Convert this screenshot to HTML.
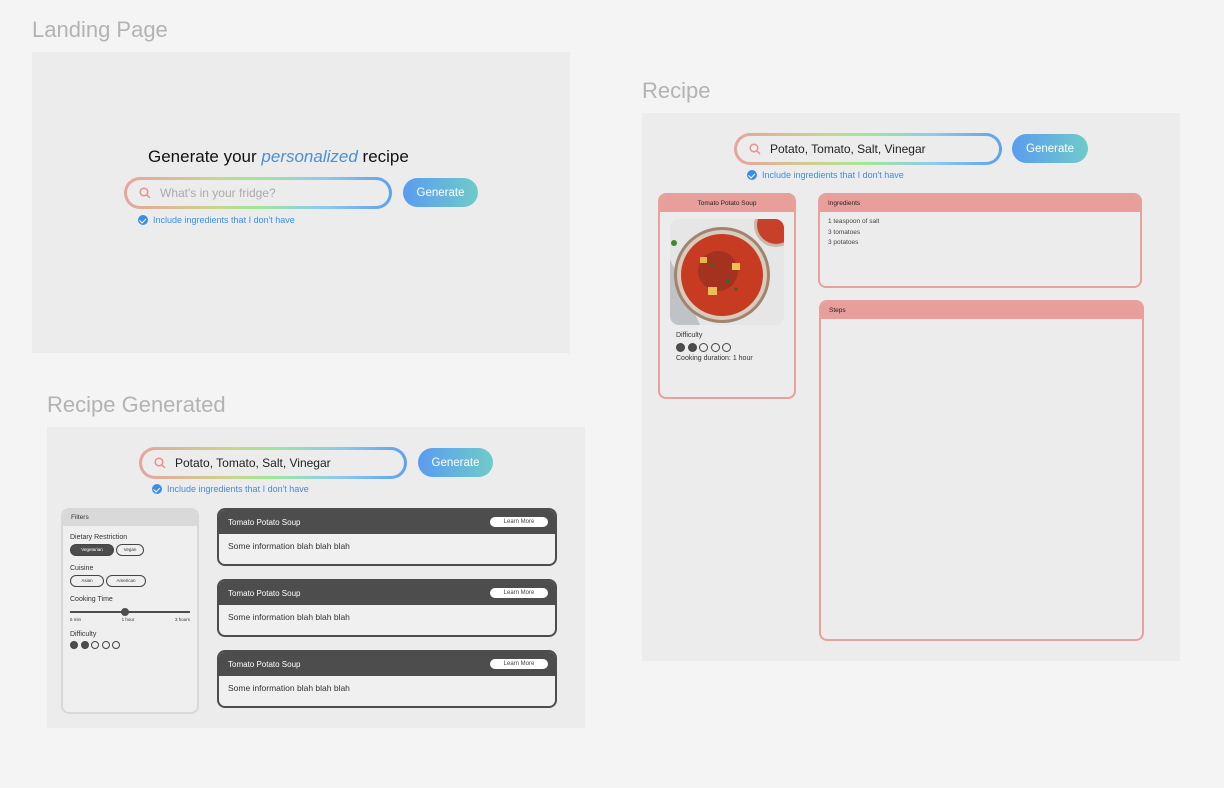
<!DOCTYPE html>
<html><head><meta charset="utf-8"><style>
*{box-sizing:border-box;margin:0;padding:0}
body{width:1224px;height:788px;background:#f4f4f4;font-family:"Liberation Sans",sans-serif;position:relative;overflow:hidden}
.a{position:absolute}
.ft{position:absolute;color:#b3b3b3;font-size:22px}
.frame{position:absolute;background:#ececec}
.sb{position:absolute;border-radius:16px;padding:3px;background:linear-gradient(90deg,#e8a39e,#c8d68e 35%,#9de89a 50%,#8fc8ef 75%,#5da2ea)}
.sb>div{background:#ececec;border-radius:13px;height:100%;display:flex;align-items:center;padding-left:12px;font-size:12px;color:#222}
.sb svg{margin-right:9px}
.btn{position:absolute;border-radius:15px;background:linear-gradient(90deg,#5a9cf0,#6fcbc8);color:#fff;font-size:11.5px;display:flex;align-items:center;justify-content:center}
.chk{position:absolute;font-size:9px;color:#3b8ee6;display:flex;align-items:center;gap:5px}
.chk i{width:10px;height:10px;border-radius:50%;background:#3b8ee6;display:inline-block;position:relative}
.chk i:after{content:"";position:absolute;left:3px;top:1.5px;width:2.5px;height:4.5px;border:solid #fff;border-width:0 1.3px 1.3px 0;transform:rotate(45deg)}
.card{position:absolute;border:2.5px solid #4d4d4d;border-radius:8px;background:#f0f0f0;overflow:hidden}
.card .h{background:#4d4d4d;height:24px;color:#fff;font-size:8px;display:flex;align-items:center;justify-content:space-between;padding:0 7px 0 9px}
.card .h span.b{background:#fff;color:#444;border-radius:6px;font-size:6px;width:58px;height:10px;line-height:10px;text-align:center}
.card .t{font-size:8.5px;color:#333;padding:7px 9px}
.pk{position:absolute;border:2.5px solid #e8a09c;border-radius:8px;background:#ececec;overflow:hidden}
.pk .h{background:#e89e9a;height:17px;font-size:7px;color:#222;display:flex;align-items:center;padding-left:8px}
.dots{display:flex;gap:2.5px}
.dots b{width:9px;height:9px;border-radius:50%;border:1px solid #444;display:inline-block}
.dots b.f{background:#4d4d4d}
.pill{display:inline-block;border:1px solid #444;border-radius:6px;height:12px;font-size:4.5px;line-height:10px;text-align:center}
</style></head><body>

<div class="ft" style="left:32px;top:17px">Landing Page</div>
<div class="frame" style="left:32px;top:52px;width:538px;height:301px"></div>
<div class="a" style="left:148px;top:147px;font-size:17px;color:#111">Generate your <i style="color:#4a8fd8">personalized</i> recipe</div>
<div class="sb" style="left:124px;top:177px;width:268px;height:32px"><div style="color:#aaa"><svg width="12" height="12" viewBox="0 0 12 12"><circle cx="5" cy="5" r="3.8" fill="none" stroke="#e8928c" stroke-width="1.5"/><path d="M8 8l3 3" stroke="#e8928c" stroke-width="1.5"/></svg>What's in your fridge?</div></div>
<div class="btn" style="left:403px;top:178px;width:75px;height:29px">Generate</div>
<div class="chk" style="left:138px;top:215px"><i></i>Include ingredients that I don't have</div>

<div class="ft" style="left:47px;top:392px">Recipe Generated</div>
<div class="frame" style="left:47px;top:427px;width:538px;height:301px"></div>
<div class="sb" style="left:139px;top:447px;width:268px;height:32px"><div><svg width="12" height="12" viewBox="0 0 12 12"><circle cx="5" cy="5" r="3.8" fill="none" stroke="#e8928c" stroke-width="1.5"/><path d="M8 8l3 3" stroke="#e8928c" stroke-width="1.5"/></svg>Potato, Tomato, Salt, Vinegar</div></div>
<div class="btn" style="left:418px;top:448px;width:75px;height:29px">Generate</div>
<div class="chk" style="left:152px;top:484px"><i></i>Include ingredients that I don't have</div>

<div class="a" style="left:61px;top:508px;width:138px;height:206px;border:2.5px solid #d8d8d8;border-radius:8px;background:#efefef;overflow:hidden;color:#333">
 <div style="background:#d9d9d9;height:16px;font-size:6.5px;padding:4px 0 0 8px">Filters</div>
 <div style="padding:4px 7px;font-size:7px">
  <div style="margin-top:4px">Dietary Restriction</div>
  <div style="margin-top:3px"><span class="pill" style="width:44px;background:#4d4d4d;color:#fff">Vegetarian</span> <span class="pill" style="width:28px">Vegan</span></div>
  <div style="margin-top:9px">Cuisine</div>
  <div style="margin-top:3px"><span class="pill" style="width:34px">Asian</span> <span class="pill" style="width:40px">American</span></div>
  <div style="margin-top:9px">Cooking Time</div>
  <div style="position:relative;height:10px;margin-top:4px"><div style="position:absolute;left:0;right:0;top:4px;height:2px;background:#4d4d4d"></div><div style="position:absolute;left:51px;top:1px;width:8px;height:8px;border-radius:50%;background:#4d4d4d"></div></div>
  <div style="display:flex;justify-content:space-between;font-size:4.5px"><span>5 min</span><span>1 hour</span><span>3 hours</span></div>
  <div style="margin-top:9px">Difficulty</div>
  <div class="dots" style="margin-top:3px"><b class="f" style="width:8px;height:8px"></b><b class="f" style="width:8px;height:8px"></b><b style="width:8px;height:8px"></b><b style="width:8px;height:8px"></b><b style="width:8px;height:8px"></b></div>
 </div>
</div>

<div class="card" style="left:217px;top:508px;width:340px;height:58px"><div class="h"><span>Tomato Potato Soup</span><span class="b">Learn More</span></div><div class="t">Some information blah blah blah</div></div>
<div class="card" style="left:217px;top:579px;width:340px;height:58px"><div class="h"><span>Tomato Potato Soup</span><span class="b">Learn More</span></div><div class="t">Some information blah blah blah</div></div>
<div class="card" style="left:217px;top:650px;width:340px;height:58px"><div class="h"><span>Tomato Potato Soup</span><span class="b">Learn More</span></div><div class="t">Some information blah blah blah</div></div>

<div class="ft" style="left:642px;top:78px">Recipe</div>
<div class="frame" style="left:642px;top:113px;width:538px;height:548px"></div>
<div class="sb" style="left:734px;top:133px;width:268px;height:32px"><div><svg width="12" height="12" viewBox="0 0 12 12"><circle cx="5" cy="5" r="3.8" fill="none" stroke="#e8928c" stroke-width="1.5"/><path d="M8 8l3 3" stroke="#e8928c" stroke-width="1.5"/></svg>Potato, Tomato, Salt, Vinegar</div></div>
<div class="btn" style="left:1012px;top:134px;width:76px;height:29px">Generate</div>
<div class="chk" style="left:747px;top:170px"><i></i>Include ingredients that I don't have</div>

<div class="pk" style="left:658px;top:193px;width:138px;height:206px">
 <div class="h" style="justify-content:center;padding:0;font-size:6.5px">Tomato Potato Soup</div>
 <svg style="position:absolute;left:10px;top:24px" width="114" height="106" viewBox="0 0 114 106">
  <defs><clipPath id="c"><rect width="114" height="106" rx="9"/></clipPath></defs>
  <g clip-path="url(#c)">
  <rect width="114" height="106" fill="#e6e6e6"/>
  <path d="M0 40 L30 106 L0 106Z" fill="#bfc3c6"/>
  <circle cx="106" cy="6" r="22" fill="#c9b8a8"/><circle cx="106" cy="6" r="19" fill="#c8402a"/>
  <circle cx="52" cy="56" r="48" fill="#a08470"/><circle cx="52" cy="56" r="45" fill="#d9ccbd"/>
  <circle cx="52" cy="56" r="41" fill="#c73b22"/>
  <circle cx="48" cy="52" r="20" fill="#8a2e1c" opacity=".6"/>
  <rect x="38" y="68" width="9" height="8" fill="#e9bf56"/><rect x="62" y="44" width="8" height="7" fill="#e9bf56"/><rect x="30" y="38" width="7" height="6" fill="#e6b54e"/>
  <circle cx="58" cy="62" r="2" fill="#2d6a2a"/><circle cx="42" cy="46" r="1.5" fill="#2d6a2a"/><circle cx="66" cy="70" r="1.5" fill="#2d6a2a"/><circle cx="4" cy="24" r="3" fill="#3a8a32"/>
  </g>
 </svg>
 <div style="position:absolute;left:16px;top:137px;font-size:7px;color:#333">Difficulty</div>
 <div class="dots" style="position:absolute;left:16px;top:148px"><b class="f"></b><b class="f"></b><b></b><b></b><b></b></div>
 <div style="position:absolute;left:16px;top:160px;font-size:7px;color:#333">Cooking duration: 1 hour</div>
</div>

<div class="pk" style="left:818px;top:193px;width:324px;height:95px">
 <div class="h" style="font-size:6.5px">Ingredients</div>
 <div style="font-size:6.5px;color:#444;padding:5px 8px;line-height:10.5px">1 teaspoon of salt<br>3 tomatoes<br>3 potatoes</div>
</div>
<div class="pk" style="left:819px;top:300px;width:325px;height:341px">
 <div class="h" style="font-size:6.5px">Steps</div>
</div>
</body></html>
